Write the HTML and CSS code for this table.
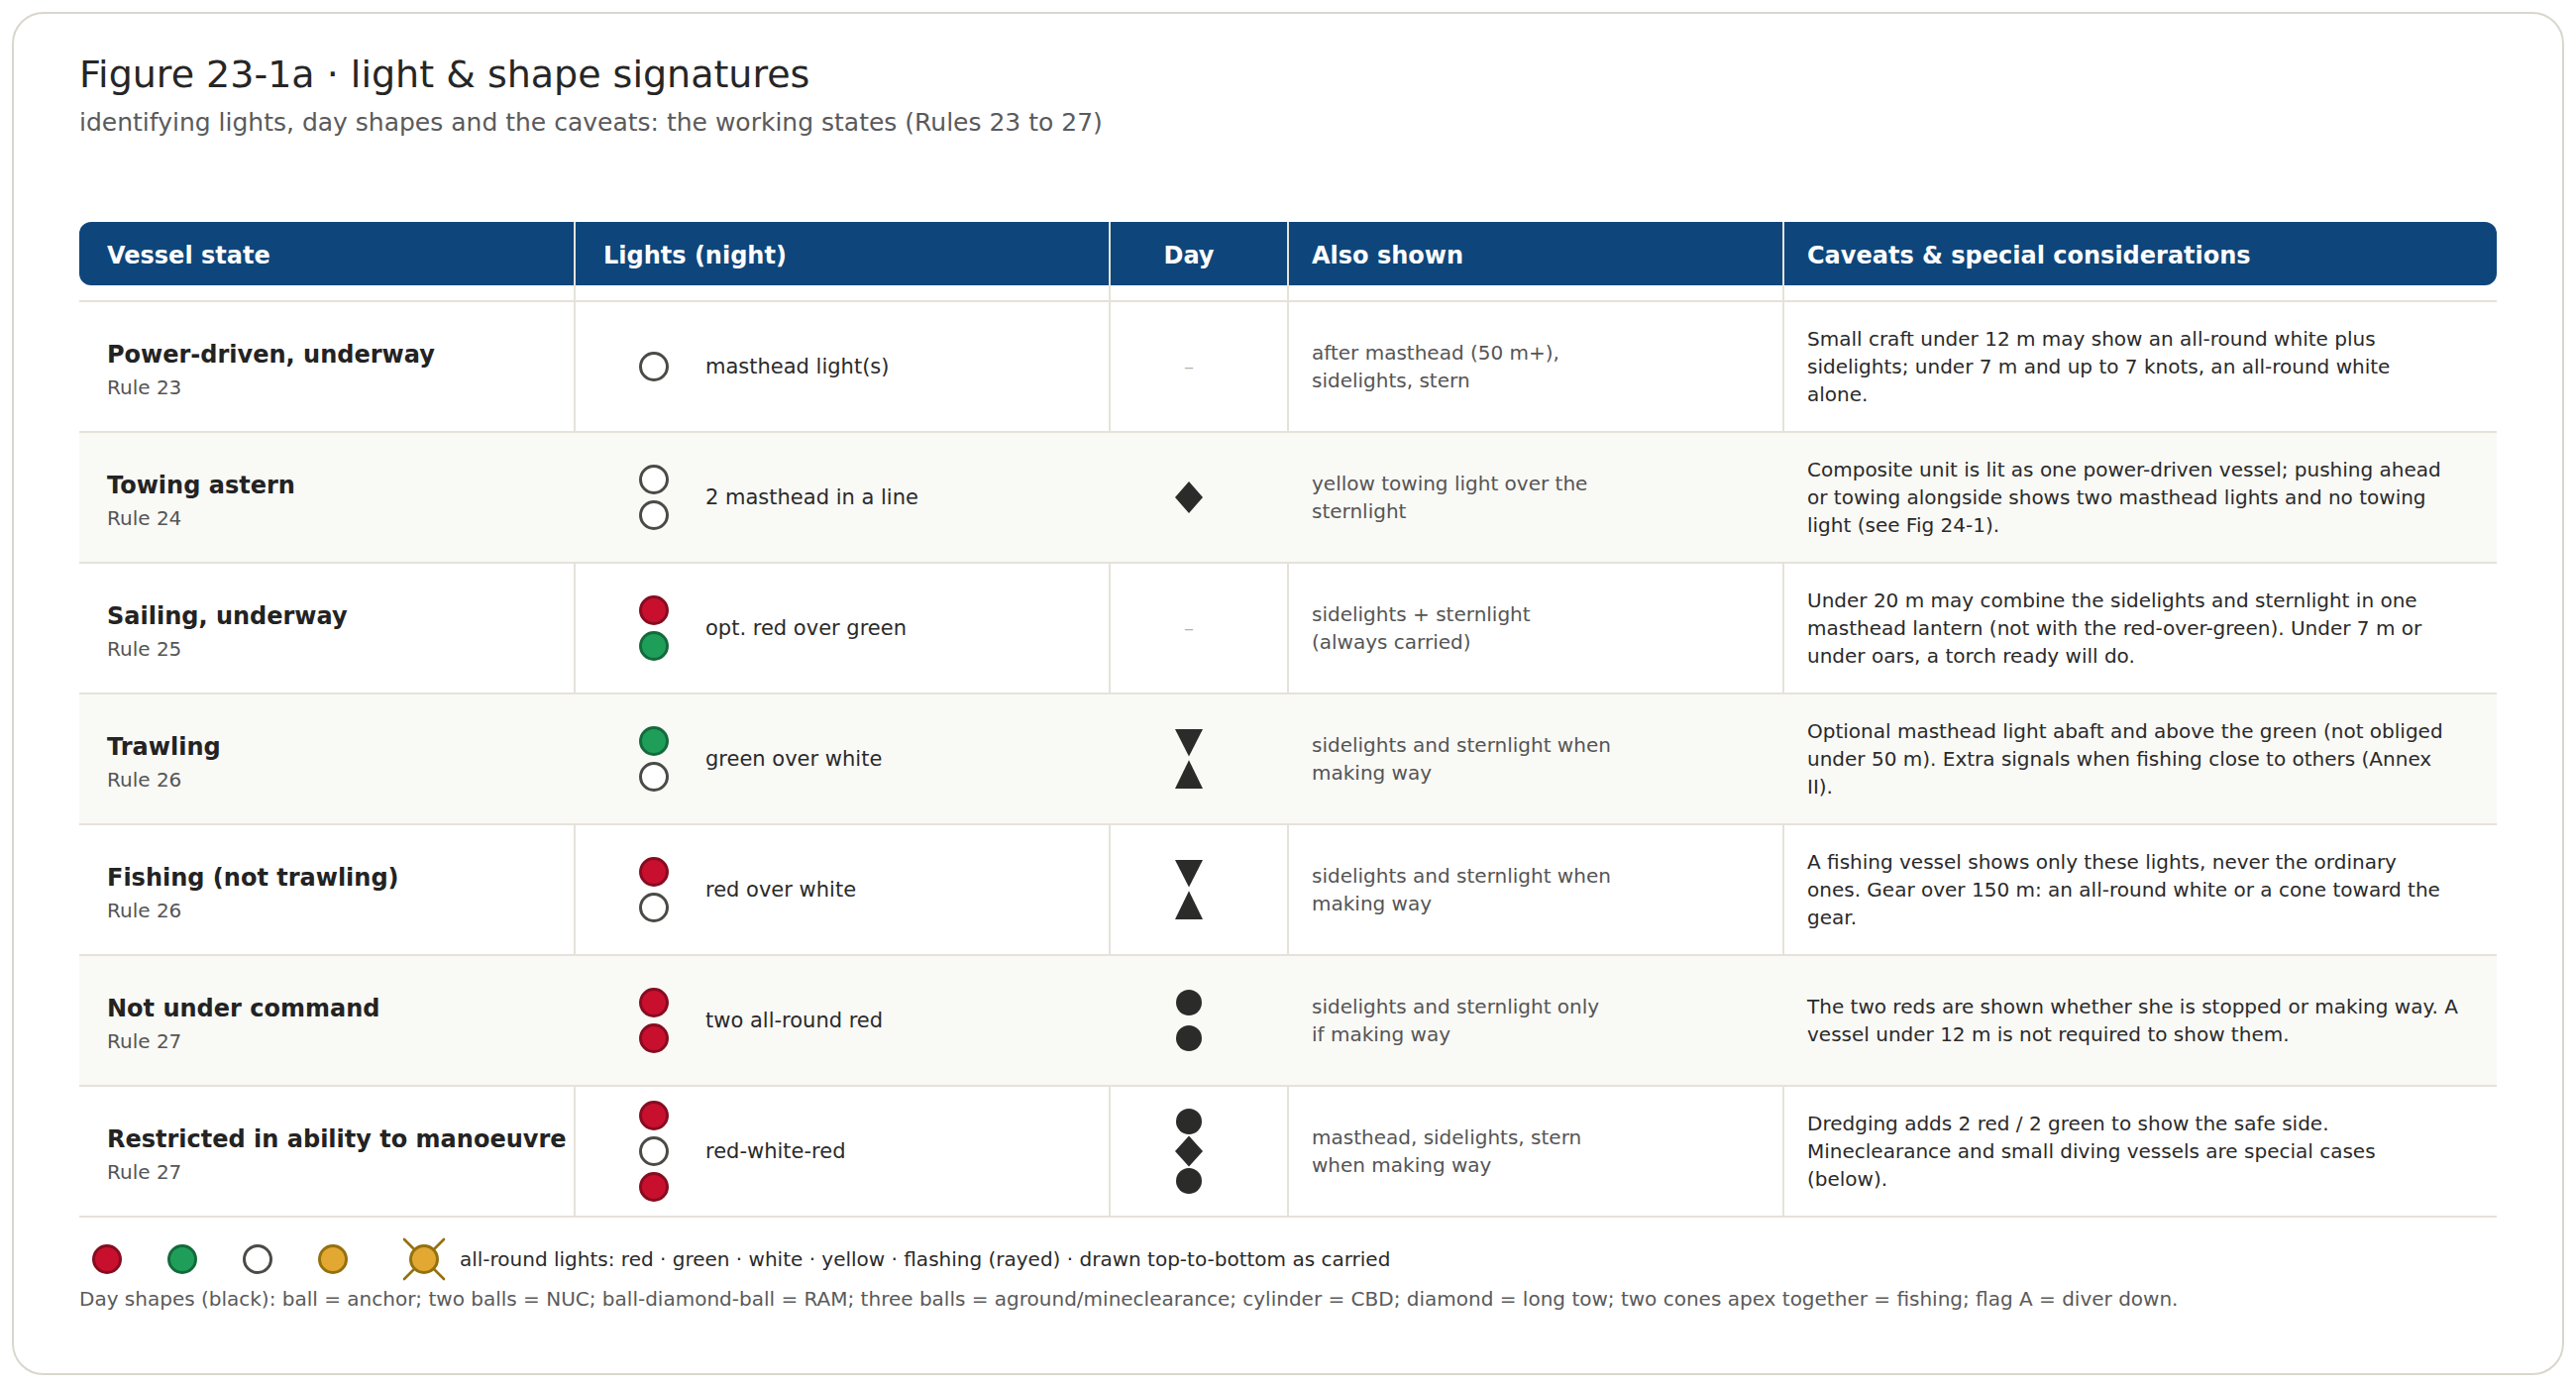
FILE: index.html
```html
<!DOCTYPE html>
<html lang="en">
<head>
<meta charset="utf-8">
<title>Figure 23-1a · light &amp; shape signatures</title>
<link rel="stylesheet" href="styles.css">
</head>
<body>
<div class="card">
  <h1 class="title">Figure 23-1a · light &amp; shape signatures</h1>
  <p class="subtitle">identifying lights, day shapes and the caveats: the working states (Rules 23 to 27)</p>

  <div class="table">
    <div class="head">
      <div class="hc h-name">Vessel state</div>
      <div class="hc h-lights">Lights (night)</div>
      <div class="hc h-day">Day</div>
      <div class="hc h-also">Also shown</div>
      <div class="hc h-cav">Caveats &amp; special considerations</div>
    </div>
    <div class="spacer">
      <div></div><div></div><div></div><div></div><div></div>
    </div>

    <div class="row">
      <div class="c name"><div><div class="vname">Power-driven, underway</div><div class="rule">Rule 23</div></div></div>
      <div class="c lights"><div class="stack"><span class="lt white"></span></div><span class="ltext">masthead light(s)</span></div>
      <div class="c day"><span class="dash">–</span></div>
      <div class="c also"><p>after masthead (50 m+),<br>sidelights, stern</p></div>
      <div class="c cav"><p>Small craft under 12 m may show an all-round white plus<br>sidelights; under 7 m and up to 7 knots, an all-round white<br>alone.</p></div>
    </div>

    <div class="row alt">
      <div class="c name"><div><div class="vname">Towing astern</div><div class="rule">Rule 24</div></div></div>
      <div class="c lights"><div class="stack"><span class="lt white"></span><span class="lt white"></span></div><span class="ltext">2 masthead in a line</span></div>
      <div class="c day"><svg class="shape" width="28" height="32" viewBox="0 0 28 32"><polygon points="14,0 28,16 14,32 0,16"/></svg></div>
      <div class="c also"><p>yellow towing light over the<br>sternlight</p></div>
      <div class="c cav"><p>Composite unit is lit as one power-driven vessel; pushing ahead<br>or towing alongside shows two masthead lights and no towing<br>light (see Fig 24-1).</p></div>
    </div>

    <div class="row">
      <div class="c name"><div><div class="vname">Sailing, underway</div><div class="rule">Rule 25</div></div></div>
      <div class="c lights"><div class="stack"><span class="lt red"></span><span class="lt green"></span></div><span class="ltext">opt. red over green</span></div>
      <div class="c day"><span class="dash">–</span></div>
      <div class="c also"><p>sidelights + sternlight<br>(always carried)</p></div>
      <div class="c cav"><p>Under 20 m may combine the sidelights and sternlight in one<br>masthead lantern (not with the red-over-green). Under 7 m or<br>under oars, a torch ready will do.</p></div>
    </div>

    <div class="row alt">
      <div class="c name"><div><div class="vname">Trawling</div><div class="rule">Rule 26</div></div></div>
      <div class="c lights"><div class="stack"><span class="lt green"></span><span class="lt white"></span></div><span class="ltext">green over white</span></div>
      <div class="c day"><svg class="shape" width="28" height="60" viewBox="0 0 28 60"><polygon points="0,0 28,0 14,27.6"/><polygon points="14,31.2 28,60 0,60"/></svg></div>
      <div class="c also"><p>sidelights and sternlight when<br>making way</p></div>
      <div class="c cav"><p>Optional masthead light abaft and above the green (not obliged<br>under 50 m). Extra signals when fishing close to others (Annex<br>II).</p></div>
    </div>

    <div class="row">
      <div class="c name"><div><div class="vname">Fishing (not trawling)</div><div class="rule">Rule 26</div></div></div>
      <div class="c lights"><div class="stack"><span class="lt red"></span><span class="lt white"></span></div><span class="ltext">red over white</span></div>
      <div class="c day"><svg class="shape" width="28" height="60" viewBox="0 0 28 60"><polygon points="0,0 28,0 14,27.6"/><polygon points="14,31.2 28,60 0,60"/></svg></div>
      <div class="c also"><p>sidelights and sternlight when<br>making way</p></div>
      <div class="c cav"><p>A fishing vessel shows only these lights, never the ordinary<br>ones. Gear over 150 m: an all-round white or a cone toward the<br>gear.</p></div>
    </div>

    <div class="row alt">
      <div class="c name"><div><div class="vname">Not under command</div><div class="rule">Rule 27</div></div></div>
      <div class="c lights"><div class="stack"><span class="lt red"></span><span class="lt red"></span></div><span class="ltext">two all-round red</span></div>
      <div class="c day"><svg class="shape" width="28" height="62" viewBox="0 0 28 62"><circle cx="14" cy="13" r="13"/><circle cx="14" cy="49" r="13"/></svg></div>
      <div class="c also"><p>sidelights and sternlight only<br>if making way</p></div>
      <div class="c cav"><p>The two reds are shown whether she is stopped or making way. A<br>vessel under 12 m is not required to show them.</p></div>
    </div>

    <div class="row last">
      <div class="c name"><div><div class="vname">Restricted in ability to manoeuvre</div><div class="rule">Rule 27</div></div></div>
      <div class="c lights"><div class="stack"><span class="lt red"></span><span class="lt white"></span><span class="lt red"></span></div><span class="ltext">red-white-red</span></div>
      <div class="c day"><svg class="shape" width="28" height="86" viewBox="0 0 28 86"><circle cx="14" cy="13" r="13"/><polygon points="14,27.5 28,43 14,58.5 0,43"/><circle cx="14" cy="73" r="13"/></svg></div>
      <div class="c also"><p>masthead, sidelights, stern<br>when making way</p></div>
      <div class="c cav"><p>Dredging adds 2 red / 2 green to show the safe side.<br>Mineclearance and small diving vessels are special cases<br>(below).</p></div>
    </div>
  </div>

  <div class="legend">
    <span class="lt red"></span>
    <span class="lt green"></span>
    <span class="lt white"></span>
    <span class="lt yellow"></span>
    <svg class="flash" width="62" height="62" viewBox="0 0 62 62">
      <g class="rays">
        <line x1="21" y1="21" x2="11" y2="11"/>
        <line x1="41" y1="21" x2="51" y2="11"/>
        <line x1="21" y1="41" x2="11" y2="51"/>
        <line x1="41" y1="41" x2="51" y2="51"/>
      </g>
      <circle class="flash-core" cx="31" cy="31" r="13.5"/>
    </svg>
    <span class="legend-text">all-round lights: red · green · white · yellow · flashing (rayed) · drawn top-to-bottom as carried</span>
  </div>
  <p class="footnote">Day shapes (black): ball = anchor; two balls = NUC; ball-diamond-ball = RAM; three balls = aground/mineclearance; cylinder = CBD; diamond = long tow; two cones apex together = fishing; flag A = diver down.</p>
</div>
</body>
</html>
```

FILE: styles.css
```css
* { box-sizing: border-box; }

html, body {
  margin: 0;
  padding: 0;
  background: #ffffff;
}

body {
  padding: 12px;
  font-family: "DejaVu Sans", Verdana, sans-serif;
  color: #2a2a2a;
}

.card {
  height: 1376px;
  border: 2px solid #d9d7cc;
  border-radius: 32px;
  background: #ffffff;
  padding: 39px 66px 0 66px;
}

.title {
  margin: 0;
  font-size: 38px;
  line-height: 45.6px;
  font-weight: normal;
  color: #262626;
}

.subtitle {
  margin: 9px 0 0 0;
  font-size: 25px;
  line-height: 32.5px;
  color: #5a5a5a;
}

.table {
  margin-top: 84px;
  width: 2440px;
}

.head,
.spacer,
.row {
  display: grid;
  grid-template-columns: 499px 540px 180px 500px 721px;
}

.head {
  height: 64px;
  background: #0e467b;
  border-radius: 12px;
  color: #ffffff;
  font-weight: bold;
  font-size: 24px;
}

.hc {
  display: flex;
  align-items: center;
  padding-top: 3px;
  border-left: 2px solid #e5e2da;
}

.h-name { border-left: none; padding-left: 28px; }
.h-lights { padding-left: 28px; }
.h-day { justify-content: center; padding-left: 8px; padding-right: 28px; }
.h-also { padding-left: 23px; }
.h-cav { padding-left: 23px; }

.spacer { height: 15px; }
.spacer > div { border-left: 2px solid #e5e2da; }
.spacer > div:first-child { border-left: none; }

.row {
  border-top: 2px solid #e5e2da;
}

.row.last {
  border-bottom: 2px solid #e5e2da;
}

.row.alt {
  background: #f9f9f6;
}

.c {
  height: 130px;
  display: flex;
  align-items: center;
  border-left: 2px solid #e5e2da;
}

.row.alt .c { border-left-color: transparent; }

.c.name {
  border-left: none;
  padding: 8px 0 0 28px;
}

.vname {
  font-size: 24px;
  line-height: 30px;
  font-weight: bold;
  color: #232323;
}

.rule {
  margin-top: 4px;
  font-size: 20px;
  line-height: 28px;
  color: #555555;
}

.c.lights {
  padding-left: 29px;
}

.stack {
  width: 100px;
  display: flex;
  flex-direction: column;
  align-items: center;
  gap: 6px;
}

.lt {
  display: block;
  width: 30px;
  height: 30px;
  border-radius: 50%;
  border: 3px solid #4a4a46;
  background: #ffffff;
  flex: none;
}

.lt.red { background: #c8102e; border-color: #860c20; }
.lt.green { background: #1f9e5a; border-color: #136a3b; }
.lt.white { background: #ffffff; border-color: #4a4a46; }
.lt.yellow { background: #e2a832; border-color: #94700f; }

.ltext {
  padding-left: 2px;
  font-size: 21px;
  line-height: 28px;
  color: #2a2a2a;
}

.c.day {
  justify-content: center;
  padding: 0 28px 0 8px;
}

.dash {
  font-size: 20px;
  color: #b3b1a9;
}

.shape {
  display: block;
  fill: #2b2b29;
}

.c.also {
  padding-left: 23px;
}

.c.also p {
  margin: 0;
  width: 340px;
  font-size: 20px;
  line-height: 28px;
  color: #555555;
}

.c.cav {
  padding-left: 23px;
}

.c.cav p {
  margin: 0;
  width: 690px;
  font-size: 20px;
  line-height: 28px;
  color: #2a2a2a;
}

.legend {
  margin-top: 25px;
  display: flex;
  align-items: center;
  gap: 46px;
  padding-left: 13px;
  height: 34px;
}

.flash {
  display: block;
  margin: -14px 0;
}

.rays line {
  stroke: #94700f;
  stroke-width: 2.6;
  stroke-linecap: round;
}

.flash-core {
  fill: #e2a832;
  stroke: #94700f;
  stroke-width: 3;
}

.legend-text {
  margin-left: -41px;
  font-size: 20px;
  color: #2a2a2a;
}

.footnote {
  margin: 10px 0 0 0;
  font-size: 20px;
  line-height: 27px;
  color: #5a5a5a;
}
```
